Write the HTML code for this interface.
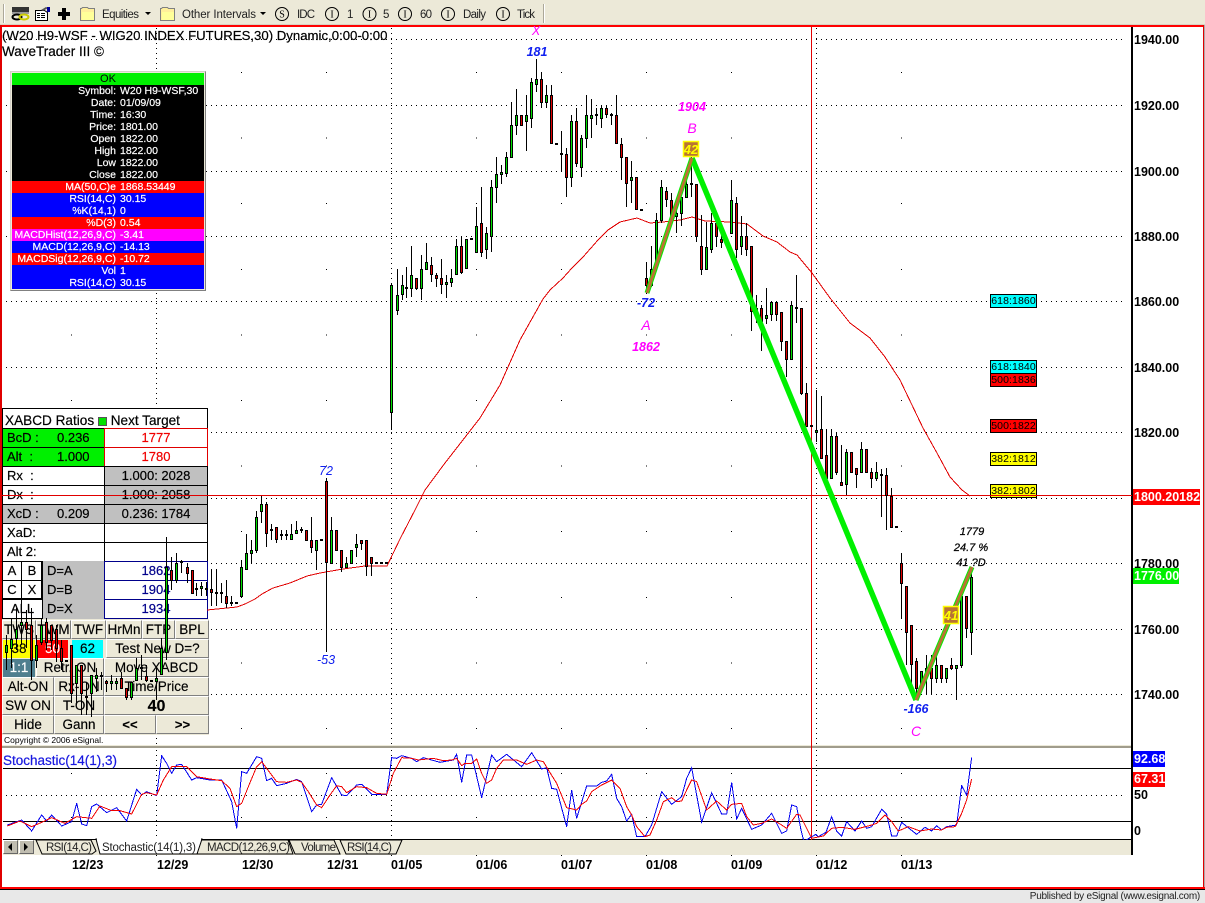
<!DOCTYPE html>
<html><head><meta charset="utf-8"><title>WaveTrader</title>
<style>
html,body{margin:0;padding:0;background:#fff}
body{position:relative;width:1205px;height:903px;overflow:hidden;font-family:"Liberation Sans",Arial,sans-serif;color:#000}
svg{position:absolute;left:0;top:0;display:block}
.a{position:absolute;box-sizing:border-box;white-space:nowrap;overflow:hidden}
.r{position:absolute;left:12px;width:192px;height:12px;font-size:10.500px;line-height:12px;color:#fff;white-space:nowrap;-webkit-text-stroke:.2px #fff}
.r b{font-weight:normal;position:absolute;right:88px}
.r i{font-style:normal;position:absolute;left:108px}
.c{position:absolute;box-sizing:border-box;font-size:13px;line-height:18px;white-space:nowrap;overflow:hidden;border:1px solid #000;padding-left:4px;background:#fff;-webkit-text-stroke:.2px}
.m{text-align:center;padding-left:0}
.g{background:#c0c0c0}
.l{background:#00f000}
.n{border-color:#00008b;color:#00008b}
.e{border-color:#e00000;color:#f00000}
.b{position:absolute;box-sizing:border-box;background:#ece9d8;border:1px solid;border-color:#fff #808080 #808080 #fff;font-size:13.500px;line-height:17px;text-align:center;white-space:nowrap;overflow:hidden;-webkit-text-stroke:.15px}
.p{position:absolute;font-size:12.500px;font-weight:bold;line-height:14px;white-space:nowrap}
.d{position:absolute;top:858px;font-size:12.500px;font-weight:bold;line-height:14px}
.f{position:absolute;left:990px;width:47px;height:14px;border:1px solid #000;box-sizing:border-box;font-size:10.500px;line-height:12px;text-align:center;letter-spacing:.1px;white-space:nowrap;overflow:hidden}
</style></head><body>

<div class="a" style="left:0;top:0;width:1205px;height:25px;background:#ece9d8"></div>
<div class="a" style="left:0;top:889px;width:1205px;height:14px;background:#e8e8e8;border-top:1px solid #000"></div>
<div class="a" style="left:1000px;top:890px;width:200px;height:12px;font-size:10px;letter-spacing:-.26px;line-height:13px;text-align:right;color:#222">Published by eSignal (www.esignal.com)</div>

<svg width="1205" height="903" viewBox="0 0 1205 903">
<!-- toolbar -->
<path d="M3.500 4V23M543.500 4V23" stroke="#aca899"/><path d="M4.500 4V23M544.500 4V23" stroke="#fff"/>
<rect x="12" y="7" width="17" height="5" fill="#333"/><rect x="12" y="12" width="17" height="2" fill="#999"/>
<ellipse cx="17" cy="17" rx="4.500" ry="2.500" fill="none" stroke="#000" stroke-width="2"/><ellipse cx="24" cy="17" rx="4.500" ry="2.500" fill="none" stroke="#cc0" stroke-width="2"/>
<path d="M35.500 10.500h9l3 2v8h-12z" fill="#fff" stroke="#000"/><path d="M37 13h3v1h-3zM41 13h4v1h-4zM37 15h3v1h-3zM41 15h4v1h-4zM37 17h3v1h-3zM41 17h4v1h-4z" fill="#000"/><path d="M41 10l5-3 2 1-5 3z" fill="#555"/><rect x="47" y="7" width="3" height="5" fill="#009"/>
<path d="M62 9h4v4h4v4h-4v4h-4v-4h-4v-4h4z" fill="#000" transform="translate(0,-1)"/>
<path d="M80.500 20.500v-12h1l1-1h5l1 1h6v12z" fill="#ffef9a" stroke="#808080"/><path d="M82 12h12v8h-12z" fill="#ffff99"/>
<path d="M160.500 20.500v-12h1l1-1h5l1 1h6v12z" fill="#ffef9a" stroke="#808080"/><path d="M162 12h12v8h-12z" fill="#ffff99"/>
<path d="M145 12h6l-3 3zM260 12h6l-3 3z" fill="#000"/>
<g fill="none" stroke="#000"><circle cx="282" cy="14" r="6.500"/><circle cx="332" cy="14" r="6.500"/><circle cx="369.500" cy="14" r="6.500"/><circle cx="405" cy="14" r="6.500"/><circle cx="448" cy="14" r="6.500"/><circle cx="503" cy="14" r="6.500"/></g>
<g font-family="Liberation Serif" font-size="10" text-anchor="middle"><text x="282" y="17.500">S</text><text x="332" y="17.500">I</text><text x="369.500" y="17.500">I</text><text x="405" y="17.500">I</text><text x="448" y="17.500">I</text><text x="503" y="17.500">I</text></g>
<g font-size="11.500" fill="#222"><text x="102" y="18" textLength="37">Equities</text><text x="182" y="18" textLength="74">Other Intervals</text><text x="297" y="18" textLength="18">IDC</text><text x="347" y="18">1</text><text x="383" y="18">5</text><text x="420" y="18" textLength="12">60</text><text x="463" y="18" textLength="23">Daily</text><text x="517" y="18" textLength="18">Tick</text></g>
<!-- frame -->
<rect x="0" y="24" width="1205" height="1" fill="#d8d4c4"/>
<rect x="0" y="25" width="1205" height="2" fill="#f00"/>
<rect x="0" y="25" width="2" height="864" fill="#e00000"/>
<rect x="1203" y="25" width="1" height="864" fill="#e00000"/><rect x="1204" y="25" width="1" height="864" fill="#aaa"/>
<rect x="0" y="887" width="1205" height="2" fill="#f00"/>
<!-- grid -->
<path d="M6 39.500H1122M6 105.500H1122M6 171.500H1122M6 236.500H1122M6 301.500H1122M6 367.500H1122M6 432.500H1122M6 498.500H1122M6 563.500H1122M6 629.500H1122M6 694.500H1122M6 795.500H1122" stroke="#000" stroke-dasharray="1 4" shape-rendering="crispEdges" fill="none"/>
<path d="M156.500 28V745M391.500 28V745M816.500 28V745M156.500 750V838M391.500 750V838M816.500 750V838M156.500 855V860M391.500 855V860M816.500 855V860" stroke="#000" stroke-dasharray="1 4" shape-rendering="crispEdges" fill="none"/>
<path d="M71.500 72V740M241.500 72V740M326.500 72V740M476.500 72V740M561.500 72V740M646.500 72V740M731.500 72V740M901.500 72V740" stroke="#000" stroke-dasharray="1 64.600" shape-rendering="crispEdges" fill="none"/>
<path d="M71 773h1v1h-1zM241 773h1v1h-1zM326 773h1v1h-1zM476 773h1v1h-1zM561 773h1v1h-1zM646 773h1v1h-1zM731 773h1v1h-1zM901 773h1v1h-1zM71 817h1v1h-1zM241 817h1v1h-1zM326 817h1v1h-1zM476 817h1v1h-1zM646 817h1v1h-1zM731 817h1v1h-1zM901 817h1v1h-1zM476 855h1v1h-1zM561 855h1v1h-1zM646 855h1v1h-1zM731 855h1v1h-1zM901 855h1v1h-1z" fill="#000"/>
<!-- stochastic panel separators -->
<rect x="2" y="745" width="1130" height="3" fill="#a09c8c"/><rect x="2" y="745" width="1130" height="1" fill="#ece9d8"/>
<rect x="3" y="839" width="1128" height="16" fill="#ece9d8"/>
<path d="M3 839.500H1131" stroke="#000"/>
<rect x="1131" y="27" width="2" height="828" fill="#000"/>
<path d="M3 768.500H1131M3 821.500H1131" stroke="#000" shape-rendering="crispEdges"/>
<!-- tabs -->
<rect x="3" y="840" width="15" height="14" fill="#c0bdb0"/><rect x="19" y="840" width="15" height="14" fill="#c0bdb0"/>
<path d="M3.500 853.500v-13h14M19.500 853.500v-13h14" stroke="#fff" fill="none"/><path d="M17.500 840.500v13h-14M33.500 840.500v13h-14" stroke="#666" fill="none"/>
<path d="M12 843v8l-4-4zM24 843v8l4-4z" fill="#000"/>
<path d="M36 840l6 14h50l4-3-5-11zM200 840l-3 14h96l-5-14zM289 840l6 14h45l-6-14zM340 840l6 14h50l6-14z" fill="#ece9d8" stroke="#000"/>
<path d="M96 839l4 15h97l5-15z" fill="#fff" stroke="#000"/>
<rect x="97" y="838" width="104" height="2" fill="#fff"/>
<g font-size="11.500" fill="#222"><text x="46" y="851" textLength="46">RSI(14,C)</text><text x="102" y="851" textLength="94">Stochastic(14(1),3)</text><text x="207" y="851" textLength="83">MACD(12,26,9,C)</text><text x="301" y="851" textLength="35">Volume</text><text x="347" y="851" textLength="45">RSI(14,C)</text></g>
</svg>

<!-- axis labels -->
<div class="p" style="left:1134px;top:33px">1940.00</div>
<div class="p" style="left:1134px;top:99px">1920.00</div>
<div class="p" style="left:1134px;top:165px">1900.00</div>
<div class="p" style="left:1134px;top:230px">1880.00</div>
<div class="p" style="left:1134px;top:295px">1860.00</div>
<div class="p" style="left:1134px;top:361px">1840.00</div>
<div class="p" style="left:1134px;top:426px">1820.00</div>
<div class="p" style="left:1134px;top:557px">1780.00</div>
<div class="p" style="left:1134px;top:623px">1760.00</div>
<div class="p" style="left:1134px;top:688px">1740.00</div>
<div class="p" style="left:1133px;top:489px;width:67px;height:16px;background:#f00;color:#fff;line-height:16px;padding-left:1px;box-sizing:border-box">1800.20182</div>
<div class="p" style="left:1133px;top:568px;width:46px;height:16px;background:#00f000;color:#fff;line-height:16px;padding-left:1px;box-sizing:border-box">1776.00</div>
<div class="p" style="left:1133px;top:751px;width:32px;height:16px;background:#00f;color:#fff;line-height:16px;padding-left:1px;box-sizing:border-box">92.68</div>
<div class="p" style="left:1133px;top:772px;width:32px;height:15px;background:#f00;color:#fff;line-height:15px;padding-left:1px;box-sizing:border-box">67.31</div>
<div class="p" style="left:1134px;top:788px">50</div>
<div class="p" style="left:1134px;top:824px">0</div>

<!-- dates -->
<div class="d" style="left:72px">12/23</div><div class="d" style="left:157px">12/29</div><div class="d" style="left:242px">12/30</div><div class="d" style="left:327px">12/31</div><div class="d" style="left:391px">01/05</div><div class="d" style="left:476px">01/06</div><div class="d" style="left:561px">01/07</div><div class="d" style="left:646px">01/08</div><div class="d" style="left:731px">01/09</div><div class="d" style="left:816px">01/12</div><div class="d" style="left:901px">01/13</div>

<!-- header -->
<div class="a" style="left:2px;top:28px;font-size:13.200px;line-height:15px;-webkit-text-stroke:.2px">(W20 H9-WSF - WIG20 INDEX FUTURES,30) Dynamic,0:00-0:00</div>
<div class="a" style="left:2px;top:44px;font-size:13.500px;line-height:15px;-webkit-text-stroke:.2px">WaveTrader III ©</div>

<!-- info panel -->
<div class="a" style="left:10px;top:71px;width:196px;height:220px;background:#ece9d8;border:1px solid;border-color:#d4d0c8 #808080 #808080 #d4d0c8"></div>
<div class="a" style="left:12px;top:73px;width:192px;height:12px;background:#00f000;font-size:11px;line-height:13px;text-align:center">OK</div>
<div class="a" style="left:12px;top:85px;width:192px;height:96px;background:#000"></div>
<div class="r" style="top:85px"><b>Symbol:</b><i>W20 H9-WSF,30</i></div>
<div class="r" style="top:97px"><b>Date:</b><i>01/09/09</i></div>
<div class="r" style="top:109px"><b>Time:</b><i>16:30</i></div>
<div class="r" style="top:121px"><b>Price:</b><i>1801.00</i></div>
<div class="r" style="top:133px"><b>Open</b><i>1822.00</i></div>
<div class="r" style="top:145px"><b>High</b><i>1822.00</i></div>
<div class="r" style="top:157px"><b>Low</b><i>1822.00</i></div>
<div class="r" style="top:169px"><b>Close</b><i>1822.00</i></div>
<div class="r" style="top:181px;background:#f00"><b>MA(50,C)e</b><i>1868.53449</i></div>
<div class="r" style="top:193px;background:#00f"><b>RSI(14,C)</b><i>30.15</i></div>
<div class="r" style="top:205px;background:#00f"><b>%K(14,1)</b><i>0</i></div>
<div class="r" style="top:217px;background:#f00"><b>%D(3)</b><i>0.54</i></div>
<div class="r" style="top:229px;background:#f0f"><b>MACDHist(12,26,9,C)</b><i>-3.41</i></div>
<div class="r" style="top:241px;background:#00f"><b>MACD(12,26,9,C)</b><i>-14.13</i></div>
<div class="r" style="top:253px;background:#f00"><b>MACDSig(12,26,9,C)</b><i>-10.72</i></div>
<div class="r" style="top:265px;background:#00f"><b>Vol</b><i>1</i></div>
<div class="r" style="top:277px;background:#00f"><b>RSI(14,C)</b><i>30.15</i></div>

<!-- XABCD table -->
<div class="c" style="left:2px;top:408px;width:206px;height:21px;line-height:24px;padding-left:2px;font-size:13.600px">XABCD Ratios <span style="display:inline-block;width:7px;height:7px;background:#00e000;border:1px solid #555;vertical-align:-1px"></span> Next Target</div>
<div class="c l" style="left:2px;top:428px;width:103px;height:20px">BcD :<span style="position:absolute;left:54px">0.236</span></div>
<div class="c e m" style="left:104px;top:428px;width:104px;height:20px">1777</div>
<div class="c l" style="left:2px;top:447px;width:103px;height:20px">Alt &nbsp;:<span style="position:absolute;left:54px">1.000</span></div>
<div class="c e m" style="left:104px;top:447px;width:104px;height:20px">1780</div>
<div class="c" style="left:2px;top:466px;width:103px;height:20px">Rx &nbsp;:</div>
<div class="c g m" style="left:104px;top:466px;width:104px;height:20px">1.000: 2028</div>
<div class="c" style="left:2px;top:485px;width:103px;height:20px">Dx &nbsp;:</div>
<div class="c g m" style="left:104px;top:485px;width:104px;height:20px">1.000: 2058</div>
<div class="c g" style="left:2px;top:504px;width:103px;height:20px">XcD :<span style="position:absolute;left:54px">0.209</span></div>
<div class="c g m" style="left:104px;top:504px;width:104px;height:20px">0.236: 1784</div>
<div class="c" style="left:2px;top:523px;width:103px;height:20px">XaD:</div>
<div class="c" style="left:104px;top:523px;width:104px;height:20px"></div>
<div class="c" style="left:2px;top:542px;width:103px;height:20px">Alt 2:</div>
<div class="c" style="left:104px;top:542px;width:104px;height:20px"></div>
<div class="c m" style="left:2px;top:561px;width:20px;height:20px">A</div>
<div class="c m" style="left:21px;top:561px;width:22px;height:20px">B</div>
<div class="c m" style="left:2px;top:580px;width:20px;height:20px">C</div>
<div class="c m" style="left:21px;top:580px;width:22px;height:20px">X</div>
<div class="c m" style="left:2px;top:599px;width:41px;height:20px">ALL</div>
<div class="a" style="left:2px;top:561px;width:41px;height:39px;border:1px solid #000;border-right-width:2px;border-bottom-width:2px"></div>
<div class="a" style="left:42px;top:561px;width:2px;height:58px;background:#000"></div>
<div class="c g" style="left:43px;top:561px;width:62px;height:20px;border:0;padding-top:1px">D=A</div>
<div class="c g" style="left:43px;top:580px;width:62px;height:20px;border:0;padding-top:1px">D=B</div>
<div class="c g" style="left:43px;top:599px;width:62px;height:20px;border:0;padding-top:1px">D=X</div>
<div class="c n m" style="left:104px;top:561px;width:104px;height:20px">1862</div>
<div class="c n m" style="left:104px;top:580px;width:104px;height:20px">1904</div>
<div class="c n m" style="left:104px;top:599px;width:104px;height:20px">1934</div>

<!-- buttons -->
<div class="a" style="left:2px;top:619px;width:207px;height:116px;background:#ece9d8"></div>
<div class="b" style="left:2px;top:620px;width:34px;height:19px">TWS</div>
<div class="b" style="left:36px;top:620px;width:35px;height:19px">TWM</div>
<div class="b" style="left:71px;top:620px;width:35px;height:19px">TWF</div>
<div class="b" style="left:106px;top:620px;width:36px;height:19px">HrMn</div>
<div class="b" style="left:142px;top:620px;width:33px;height:19px">FTP</div>
<div class="b" style="left:175px;top:620px;width:34px;height:19px">BPL</div>
<div class="b" style="left:3px;top:640px;width:32px;height:18px;background:#ff0;border:0">38</div>
<div class="b" style="left:37px;top:640px;width:31px;height:18px;background:#f00;border:0;color:#fff">50</div>
<div class="b" style="left:72px;top:640px;width:31px;height:18px;background:#0ff;border:0">62</div>
<div class="b" style="left:106px;top:639px;width:103px;height:19px">Test New D=?</div>
<div class="b" style="left:3px;top:659px;width:32px;height:18px;background:#4f7f8f;border:0;color:#fff">1:1</div>
<div class="b" style="left:36px;top:658px;width:68px;height:19px">Retr. ON</div>
<div class="b" style="left:104px;top:658px;width:105px;height:19px">Move XABCD</div>
<div class="b" style="left:2px;top:677px;width:52px;height:19px">Alt-ON</div>
<div class="b" style="left:54px;top:677px;width:50px;height:19px">Rx-ON</div>
<div class="b" style="left:104px;top:677px;width:105px;height:19px">Time/Price</div>
<div class="b" style="left:2px;top:696px;width:52px;height:19px">SW ON</div>
<div class="b" style="left:54px;top:696px;width:50px;height:19px">T-ON</div>
<div class="b" style="left:104px;top:696px;width:105px;height:19px;font-size:16px;font-weight:bold;line-height:19px">40</div>
<div class="b" style="left:2px;top:715px;width:52px;height:19px">Hide</div>
<div class="b" style="left:54px;top:715px;width:50px;height:19px">Gann</div>
<div class="b" style="left:104px;top:715px;width:52px;height:19px;font-weight:bold;font-size:13px">&lt;&lt;</div>
<div class="b" style="left:156px;top:715px;width:53px;height:19px;font-weight:bold;font-size:13px">&gt;&gt;</div>
<div class="a" style="left:4px;top:735px;width:150px;height:10px;font-size:8.500px;line-height:10px">Copyright © 2006 eSignal.</div>

<!-- target boxes -->
<div class="f" style="top:294px;background:#0ff">618:1860</div>
<div class="f" style="top:360px;background:#0ff">618:1840</div>
<div class="f" style="top:373px;background:#f00">500:1836</div>
<div class="f" style="top:419px;background:#f00">500:1822</div>
<div class="f" style="top:452px;background:#ff0">382:1812</div>
<div class="f" style="top:484px;background:#ff0">382:1802</div>

<!-- chart overlay -->
<svg width="1205" height="903" viewBox="0 0 1205 903">
<defs><clipPath id="st"><rect x="3" y="748" width="1128" height="92"/></clipPath></defs>
<path d="M0 495.500H1132M811.500 27V840" stroke="#e00000" fill="none" shape-rendering="crispEdges"/>
<polyline points="207,610 237,607 245,604 255,599 262,594 273,588 290,583 307,576 320,573 343,569 365,566 387,566 400,539 415,510 425,490 445,463 480,418 500,385 520,340 543,299 550,290 563,278 572,268 583,257 598,240 608,230 620,222 637,218 650,223 663,222 680,220 692,217 705,221 730,222 747,224 763,236 777,242 790,252 797,255 812,273 830,298 850,323 870,338 885,357 900,380 923,428 937,453 950,477 962,490 970,496" fill="none" stroke="#e00000" shape-rendering="crispEdges"/>
<!-- wicks -->
<path stroke="#000" fill="none" shape-rendering="crispEdges" d="M6.500 635V670M11.500 618V668M16.500 608V650M21.500 600V645M26.500 610V648M31.500 608V680M36.500 635V668M41.500 618V645M46.500 618V650M51.500 625V650M56.500 625V662M61.500 640V670M71.500 645V703M76.500 665V705M81.500 665V715M86.500 682V715M91.500 675V717M96.500 668V692M101.500 672V690M106.500 680V692M111.500 675V690M116.500 678V690M121.500 672V688M126.500 688V700M131.500 682V700M136.500 658V680M141.500 655V680M146.500 665V682M156.500 668V700M161.500 638V675M166.500 537V660M171.500 557V590M176.500 553V583M181.500 560V573M187.500 563V583M192.500 570V593M196.500 583V596M201.500 582V596M206.500 582V596M211.500 569V606M216.500 569V606M221.500 583V603M226.500 580V608M231.500 596V606M241.500 560V596M246.500 534V569M251.500 540V563M256.500 511V553M261.500 496V523M266.500 502V547M271.500 524V540M276.500 527V543M281.500 530V540M286.500 530V540M291.500 524V540M296.500 521V533M301.500 527V533M311.500 517V553M316.500 540V570M326.500 478V652M331.500 517V563M336.500 530V550M341.500 550V572M346.500 557V567M351.500 550V563M356.500 534V557M361.500 540V550M366.500 540V576M371.500 557V576M391.500 283V430M397.500 269V315M402.500 275V300M406.500 267V298M411.500 246V297M416.500 278V290M421.500 255V300M426.500 243V270M431.500 257V282M436.500 273V287M441.500 259V294M446.500 275V298M451.500 269V287M456.500 239V274M461.500 236V274M476.500 207V252M481.500 187V257M486.500 227V259M491.500 180V252M496.500 157V203M501.500 165V184M506.500 152V177M511.500 102V157M516.500 89V135M521.500 115V125M526.500 95V151M531.500 78V128M536.500 59V92M541.500 72V108M546.500 85V108M551.500 85V143M561.500 131V172M566.500 148V197M571.500 115V187M576.500 108V167M581.500 135V177M586.500 95V148M591.500 99V138M596.500 108V125M601.500 105V128M606.500 105V118M611.500 113V125M616.500 95V143M621.500 138V180M626.500 157V207M631.500 161V203M646.500 262V294M651.500 246V287M656.500 213V267M661.500 180V223M666.500 187V207M671.500 193V226M676.500 203V233M681.500 197V226M686.500 170V197M691.500 157V197M696.500 184V242M701.500 215V275M706.500 222V269M711.500 213V253M716.500 222V247M721.500 233V248M731.500 180V233M736.500 197V258M741.500 216V255M746.500 223V256M751.500 246V331M756.500 295V323M761.500 305V351M766.500 288V324M771.500 302V321M776.500 302V321M781.500 312V351M786.500 341V377M791.500 302V359M796.500 275V323M801.500 308V395M806.500 383V426M816.500 390V442M821.500 396V458M826.500 429V490M831.500 429V478M836.500 432V475M841.500 445V485M846.500 449V495M851.500 452V472M856.500 468V488M861.500 442V472M866.500 449V472M871.500 468V488M876.500 462V481M881.500 469V517M886.500 468V530M891.500 488V527M901.500 553V619M906.500 586V665M911.500 625V688M916.500 658V698M921.500 671V688M926.500 655V695M931.500 655V695M936.500 655V683M941.500 665V683M946.500 668V683M951.500 658V670M956.500 665V700M961.500 596V668M966.500 596V638M971.500 567V655"/>
<!-- dashes -->
<path fill="#000" d="M65 660h3v2h-3zM85 696h3v2h-3zM100 675h3v2h-3zM140 667h3v2h-3zM150 680h3v2h-3zM180 561h3v2h-3zM195 588h3v2h-3zM205 588h3v2h-3zM215 592h3v2h-3zM220 592h3v2h-3zM230 602h3v2h-3zM235 602h3v2h-3zM270 529h3v2h-3zM280 534h3v2h-3zM285 534h3v2h-3zM300 529h3v2h-3zM320 539h3v2h-3zM375 562h3v2h-3zM380 562h3v2h-3zM385 562h3v2h-3zM405 287h3v2h-3zM470 238h3v2h-3zM555 143h3v2h-3zM560 153h3v2h-3zM595 114h3v2h-3zM610 114h3v2h-3zM640 209h3v2h-3zM690 183h3v2h-3zM725 242h3v2h-3zM795 307h3v2h-3zM810 425h3v2h-3zM880 474h3v2h-3zM895 526h3v2h-3z"/>
<!-- green bodies -->
<path fill="#00e000" stroke="#000" shape-rendering="crispEdges" d="M5.500 645.500h2v7h-2zM10.500 639.500h2v9h-2zM15.500 629.500h2v9h-2zM20.500 622.500h2v3h-2zM35.500 645.500h2v15h-2zM40.500 625.500h2v17h-2zM75.500 665.500h2v18h-2zM90.500 675.500h2v18h-2zM95.500 675.500h2v3h-2zM110.500 681.500h2v2h-2zM115.500 681.500h2v2h-2zM130.500 682.500h2v15h-2zM135.500 668.500h2v12h-2zM155.500 678.500h2v3h-2zM160.500 648.500h2v26h-2zM165.500 567.500h2v85h-2zM175.500 563.500h2v17h-2zM200.500 586.500h2v2h-2zM240.500 567.500h2v29h-2zM245.500 553.500h2v16h-2zM250.500 550.500h2v3h-2zM255.500 517.500h2v33h-2zM260.500 504.500h2v7h-2zM290.500 534.500h2v5h-2zM295.500 530.500h2v3h-2zM315.500 540.500h2v10h-2zM330.500 530.500h2v33h-2zM345.500 563.500h2v4h-2zM350.500 550.500h2v13h-2zM355.500 544.500h2v3h-2zM390.500 285.500h2v127h-2zM396.500 295.500h2v15h-2zM401.500 285.500h2v9h-2zM410.500 275.500h2v13h-2zM420.500 269.500h2v19h-2zM425.500 262.500h2v7h-2zM445.500 282.500h2v2h-2zM450.500 278.500h2v4h-2zM455.500 246.500h2v28h-2zM465.500 239.500h2v29h-2zM475.500 226.500h2v26h-2zM485.500 233.500h2v16h-2zM490.500 187.500h2v49h-2zM495.500 174.500h2v13h-2zM500.500 172.500h2v2h-2zM505.500 157.500h2v16h-2zM510.500 125.500h2v32h-2zM515.500 115.500h2v10h-2zM525.500 115.500h2v6h-2zM530.500 82.500h2v36h-2zM535.500 79.500h2v5h-2zM545.500 95.500h2v7h-2zM570.500 121.500h2v56h-2zM580.500 138.500h2v29h-2zM585.500 115.500h2v23h-2zM590.500 115.500h2v3h-2zM600.500 108.500h2v10h-2zM630.500 177.500h2v3h-2zM650.500 269.500h2v16h-2zM655.500 220.500h2v45h-2zM660.500 187.500h2v33h-2zM675.500 213.500h2v3h-2zM680.500 197.500h2v16h-2zM685.500 184.500h2v13h-2zM705.500 247.500h2v22h-2zM710.500 223.500h2v26h-2zM730.500 200.500h2v33h-2zM740.500 236.500h2v10h-2zM755.500 308.500h2v3h-2zM765.500 315.500h2v3h-2zM770.500 302.500h2v12h-2zM790.500 305.500h2v54h-2zM815.500 430.500h2v2h-2zM830.500 436.500h2v42h-2zM845.500 452.500h2v32h-2zM860.500 449.500h2v23h-2zM875.500 472.500h2v6h-2zM920.500 671.500h2v12h-2zM925.500 668.500h2v6h-2zM935.500 665.500h2v13h-2zM945.500 668.500h2v10h-2zM955.500 665.500h2v3h-2zM960.500 596.500h2v69h-2zM970.500 577.500h2v55h-2z"/>
<!-- red bodies -->
<path fill="#e00000" stroke="#000" shape-rendering="crispEdges" d="M25.500 622.500h2v7h-2zM30.500 625.500h2v35h-2zM45.500 622.500h2v20h-2zM50.500 625.500h2v15h-2zM55.500 629.500h2v19h-2zM60.500 648.500h2v13h-2zM70.500 645.500h2v48h-2zM80.500 665.500h2v28h-2zM105.500 681.500h2v2h-2zM120.500 678.500h2v10h-2zM125.500 688.500h2v9h-2zM145.500 676.500h2v4h-2zM170.500 570.500h2v10h-2zM186.500 567.500h2v6h-2zM191.500 570.500h2v23h-2zM210.500 589.500h2v3h-2zM225.500 596.500h2v7h-2zM265.500 504.500h2v29h-2zM275.500 527.500h2v12h-2zM305.500 530.500h2v10h-2zM310.500 540.500h2v7h-2zM325.500 481.500h2v81h-2zM335.500 530.500h2v20h-2zM340.500 550.500h2v17h-2zM360.500 540.500h2v3h-2zM365.500 540.500h2v26h-2zM370.500 557.500h2v6h-2zM415.500 278.500h2v10h-2zM430.500 265.500h2v9h-2zM435.500 275.500h2v3h-2zM440.500 278.500h2v6h-2zM460.500 246.500h2v26h-2zM480.500 223.500h2v29h-2zM520.500 115.500h2v10h-2zM540.500 79.500h2v23h-2zM550.500 95.500h2v48h-2zM565.500 154.500h2v23h-2zM575.500 121.500h2v42h-2zM605.500 108.500h2v6h-2zM615.500 115.500h2v28h-2zM620.500 144.500h2v13h-2zM625.500 157.500h2v26h-2zM635.500 177.500h2v32h-2zM645.500 278.500h2v7h-2zM665.500 191.500h2v8h-2zM670.500 200.500h2v16h-2zM695.500 184.500h2v52h-2zM700.500 246.500h2v23h-2zM715.500 223.500h2v13h-2zM720.500 239.500h2v3h-2zM735.500 203.500h2v46h-2zM745.500 236.500h2v13h-2zM750.500 246.500h2v65h-2zM760.500 308.500h2v13h-2zM775.500 302.500h2v12h-2zM780.500 312.500h2v29h-2zM785.500 341.500h2v18h-2zM800.500 308.500h2v85h-2zM805.500 393.500h2v33h-2zM820.500 429.500h2v29h-2zM825.500 455.500h2v23h-2zM835.500 436.500h2v36h-2zM840.500 482.500h2v3h-2zM850.500 452.500h2v20h-2zM855.500 468.500h2v6h-2zM865.500 449.500h2v23h-2zM870.500 472.500h2v6h-2zM885.500 475.500h2v20h-2zM890.500 496.500h2v31h-2zM900.500 563.500h2v20h-2zM905.500 586.500h2v46h-2zM910.500 625.500h2v39h-2zM915.500 661.500h2v27h-2zM930.500 668.500h2v10h-2zM940.500 665.500h2v13h-2zM950.500 665.500h2v3h-2zM965.500 596.500h2v32h-2z"/>
<!-- pattern lines -->
<path d="M692 158L916 700" stroke="#00f000" stroke-width="5.500" fill="none"/>
<path d="M647 293L692 158M916 700L972 567" stroke="#00f000" stroke-width="5" fill="none"/>
<path d="M647 293L692 158M916 700L972 567" stroke="#b87333" stroke-width="3" fill="none"/>
<rect x="683.500" y="141.500" width="15" height="15" fill="#b87333" stroke="#ff0" stroke-width="1.500"/>
<rect x="943.500" y="606.500" width="15" height="17" fill="#b87333" stroke="#ff0" stroke-width="1.500"/>
<g font-weight="bold" font-style="italic" font-size="13" fill="#ff0" text-anchor="middle"><text x="691" y="154">42</text><text x="951" y="620">41</text></g>
<g font-style="italic" font-size="12.500" text-anchor="middle" font-weight="bold">
<text x="536" y="35" fill="#f0f" font-weight="normal">X</text>
<text x="537" y="56" fill="#1020f0">181</text>
<text x="692" y="111" fill="#f0f">1904</text>
<text x="692" y="133" fill="#f0f" font-weight="normal" font-size="14">B</text>
<text x="646" y="307" fill="#1020f0">-72</text>
<text x="646" y="330" fill="#f0f" font-weight="normal" font-size="14">A</text>
<text x="646" y="351" fill="#f0f">1862</text>
<text x="326" y="475" fill="#1020f0" font-weight="normal">72</text>
<text x="326" y="664" fill="#1020f0" font-weight="normal">-53</text>
<text x="916" y="713" fill="#1020f0">-166</text>
<text x="916" y="736" fill="#f0f" font-weight="normal" font-size="14">C</text>
<g font-size="11" fill="#000" font-weight="normal" stroke="#000" stroke-width=".25"><text x="972" y="535">1779</text><text x="971" y="551">24.7 %</text><text x="971" y="566">41 ?D</text></g>
</g>
<!-- stochastic -->
<g clip-path="url(#st)">
<g transform="translate(0,745) scale(.33333)" fill="none" shape-rendering="crispEdges">
<polyline vector-effect="non-scaling-stroke" stroke="#0000f0" points="22,240 65,225 95,258 125,210 140,228 155,210 185,243 215,230 230,175 245,237 260,242 275,185 290,177 320,203 350,188 380,228 410,133 425,150 440,140 470,152 485,32 500,55 515,85 530,60 545,58 575,105 590,98 630,105 665,105 695,170 710,250 725,80 740,85 770,35 785,40 800,107 815,100 830,122 860,115 890,103 905,110 935,200 950,180 965,178 995,98 1025,150 1040,152 1070,120 1085,118 1115,148 1160,148 1175,38 1190,40 1205,32 1235,40 1250,50 1270,38 1320,52 1360,45 1370,28 1385,112 1400,30 1415,30 1445,158 1475,30 1490,50 1520,28 1565,65 1595,23 1625,72 1640,68 1655,130 1670,133 1700,245 1715,135 1730,220 1760,123 1790,123 1805,112 1820,108 1835,88 1850,160 1865,185 1880,228 1895,208 1910,275 1935,275 1955,240 1985,140 2015,178 2045,155 2060,100 2075,68 2105,232 2135,143 2165,207 2180,207 2195,112 2210,222 2225,190 2255,253 2285,240 2315,205 2345,265 2360,258 2375,180 2390,185 2403,255 2412,290 2430,278 2448,268 2455,275 2478,262 2495,215 2510,258 2525,273 2540,230 2565,258 2585,228 2600,250 2615,245 2645,193 2660,208 2675,273 2690,273 2705,232 2750,268 2775,247 2795,258 2810,242 2825,255 2840,245 2870,240 2885,122 2900,150 2915,37"/>
<polyline vector-effect="non-scaling-stroke" stroke="#f00000" points="22,243 60,228 95,245 125,232 155,218 195,235 230,215 275,220 300,183 335,197 360,197 395,207 425,148 440,143 470,150 490,105 515,65 560,65 590,95 630,102 665,107 690,130 710,185 725,175 745,125 770,65 785,50 800,70 830,110 860,112 890,105 905,112 925,140 950,180 965,188 990,150 1010,122 1025,125 1040,143 1070,125 1100,128 1130,145 1160,148 1180,85 1205,38 1235,40 1255,45 1300,40 1330,47 1355,45 1370,40 1385,62 1395,55 1415,55 1430,42 1445,85 1460,115 1475,105 1490,70 1510,45 1550,45 1580,58 1610,45 1630,50 1645,75 1670,115 1700,188 1730,195 1745,178 1760,168 1775,140 1805,120 1835,105 1860,130 1880,185 1895,210 1910,245 1935,275 1950,270 1970,225 1990,170 2015,158 2030,170 2045,168 2060,135 2075,105 2090,110 2120,195 2150,168 2180,195 2195,178 2225,175 2240,215 2260,240 2285,235 2315,222 2345,240 2360,250 2390,208 2400,210 2420,250 2435,280 2470,273 2495,250 2525,247 2565,253 2585,248 2615,240 2630,235 2655,210 2675,230 2695,258 2725,245 2760,258 2795,252 2825,255 2840,247 2865,245 2885,205 2900,165 2915,102"/>
</g></g>
<text x="3" y="765" font-size="13.500" fill="#1818e0" stroke="#1818e0" stroke-width=".2">Stochastic(14(1),3)</text>
</svg>
</body></html>
